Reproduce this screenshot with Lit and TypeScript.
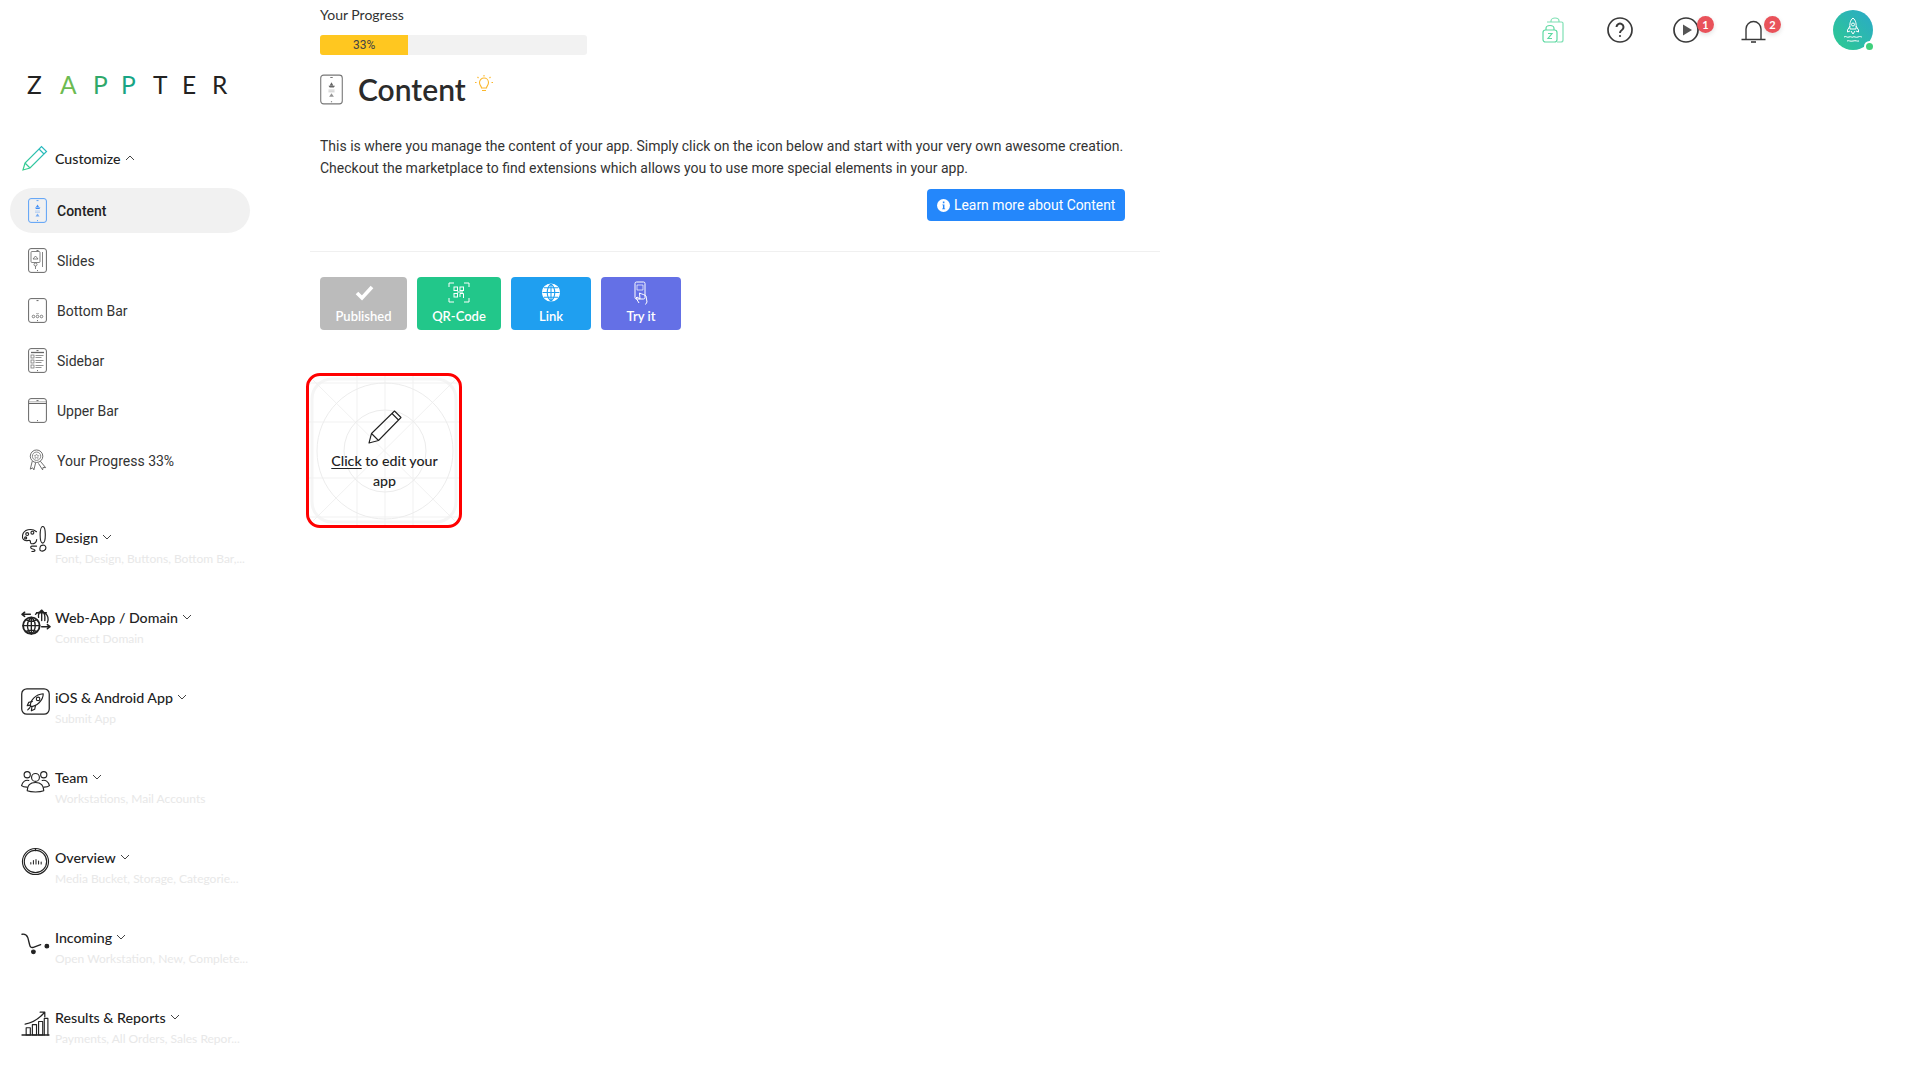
import { LitElement, html, css, svg } from "lit";
import { customElement } from "lit/decorators.js";

const phone = (inner: unknown, color = "#666") => html`<svg class="phone" viewBox="0 0 19 25" fill="none" stroke=${color} stroke-width="1"><rect x=".6" y=".6" width="17.8" height="23.8" rx="2.4"/><path d="M8.5 2.6h2M9 22.6h1"/>${inner}</svg>`;

const contentInner = (c: string) => svg`<path d="M9.5 6.5l1.5 2.6H8z M7 9.5h5.4l-1 1.4H8z" fill=${c} stroke="none"/><path d="M7 13h5M7 14.4h5" stroke=${c} stroke-width=".5" opacity=".6"/><path d="M9.5 15.5l2 3h-4z" fill=${c} stroke="none" opacity=".7"/>`;

const items = [
  { label: "Content", active: true, icon: phone(contentInner("#3f8df5"), "#5aa0f7") },
  { label: "Slides", icon: phone(svg`<rect x="3" y="3.5" width="9" height="11" rx="1" stroke-width=".8"/><path d="M14.5 4v15M5 11l2.5-3 2.5 3z" stroke-width=".8"/><circle cx="7.5" cy="16.5" r="1.5" stroke-width=".8"/><path d="M7.5 18v3" stroke-width=".8"/>`) },
  { label: "Bottom Bar", icon: phone(svg`<circle cx="5.5" cy="18.5" r="1.3" stroke-width=".8"/><circle cx="9.5" cy="18.5" r="1.3" stroke-width=".8"/><circle cx="13.5" cy="18.5" r="1.3" stroke-width=".8"/><path d="M8 15.6h3" stroke-width=".5"/>`) },
  { label: "Sidebar", icon: phone(svg`<path d="M3 4.5h13" stroke-width="1.3"/><rect x="3" y="7" width="3" height="3" stroke-width=".7"/><rect x="3" y="12" width="3" height="3" stroke-width=".7"/><rect x="3" y="17" width="3" height="3" stroke-width=".7"/><path d="M7.5 7.5h8M7.5 9.5h6M7.5 12.5h8M7.5 14.5h6M7.5 17.5h8M7.5 19.5h6" stroke-width=".7"/>`) },
  { label: "Upper Bar", icon: phone(svg`<path d="M1 5.5h17" stroke-width="1"/><path d="M1 3.8h17" stroke-width=".5"/>`) },
  { label: "Your Progress 33%", icon: html`<svg class="phone" viewBox="0 0 20 25" fill="none" stroke="#666" stroke-width="1"><circle cx="9" cy="8" r="6.6"/><circle cx="9" cy="8" r="4.4" stroke-width=".8"/><path d="M9 5.6l.8 1.6 1.7.2-1.2 1.2.3 1.7L9 9.5l-1.6.8.3-1.7-1.2-1.2 1.7-.2z" stroke-width=".6"/><path d="M4.5 13.2L2.4 21.6l2.6-1.4 1.2 2.2L8 15M13 13.3l5.6 6.7-2.8-.2-.4 2.6L11 15.5"/></svg>` },
];

const gIcons: Record<string, unknown> = {
  design: svg`<path d="M15 5.500C10 1.500 2.500 3.500 1.500 9c-.6 3.500 1.500 5.500 4 5.200 2-.2 3-.9 3.500.3.4 1-.6 2 1 2.500 2.500.7 5-1 5.200-4" /><circle cx="6" cy="7.800" r="1.400"/><circle cx="11" cy="6.500" r="1.400"/><circle cx="4.500" cy="11.500" r="1"/><ellipse cx="21" cy="8.500" rx="2.500" ry="8"/><path d="M19.300 19c2-1.200 4.800-.3 4.800 2 0 2.400-2.800 3.800-5 3-1.600-.6-.8-3.800.2-5zM15 19.500h-4.500c-1.500 0-1.500 2.200 0 2.500 1.600.3 3 .8 3 1.600 0 .8-1.200 1-3 1"/>`,
  web: svg`<circle cx="10" cy="19" r="8" stroke-width="1.800"/><path d="M2 19h16M10 11v16M5 13.500c3 1.500 7 1.500 10 0M5 24.500c3-1.500 7-1.500 10 0M10 11c-5 4-5 12 0 16M10 11c5 4 5 12 0 16" stroke-width="1.300"/><path d="M14 8a7 7 0 0 1 12 3c.5 2 .3 3.500-.5 5M15 6.500h9.500M20 4v10M20 4c-3 2.500-3.500 5-3 7M20 4c3 2.500 3.500 6 3 10" stroke-width="1.300"/><path d="M1 8h8M1 8l2.500-2M1 8l2.500 2M20 20h8M28 20l-2.500-2M28 20l-2.500 2" stroke-width="1.500"/>`,
  ios: svg`<rect x=".7" y="2.700" width="26.600" height="24.600" rx="5" stroke-width="1.200"/><path d="M9 20c-.5-6 5-12 12.500-12.500C21.500 14 15 20 9 20z"/><circle cx="16.500" cy="12.500" r="1.700"/><path d="M11 15l-3.500.8L6 19l3.500-.5M14 19l-.8 3.500L10 24l.5-3.500M8.500 21l-2 2"/>`,
  team: svg`<circle cx="14" cy="11" r="3.800"/><path d="M6 24c0-5 3-8 8-8s8 3 8 8c-4 1.500-12 1.500-16 0z"/><circle cx="6" cy="8.500" r="3"/><circle cx="22" cy="8.500" r="3"/><path d="M7.500 14c-3-1-6 1-7 5 1.200 1 3 1.400 5 1.400M20.500 14c3-1 6 1 7 5-1.200 1-3 1.400-5 1.400"/>`,
  overview: svg`<circle cx="14" cy="15" r="12.600"/><circle cx="14" cy="15" r="10.800"/><path d="M9.500 16v1.500M12 14v3.500M14.500 13v4.500M17 14.500v3M19.500 15.500v2" stroke-width="1"/><path d="M14 2.500v2" />`,
  incoming: svg`<path d="M1 8c3-.5 4.500.5 5.500 3 1 3 1.500 7 2.500 9 .6 1 1.500 1 3 .6l7-2.600" stroke-width="1.300"/><circle cx="12" cy="25" r="1.800" fill="#222"/><circle cx="25" cy="19.500" r="1.800" fill="#222"/>`,
  results: svg`<path d="M1 28h26" stroke-width="1.300"/><rect x="5" y="21" width="4" height="7"/><rect x="11" y="18" width="4" height="10"/><rect x="17" y="15" width="4" height="13"/><path d="M22.500 28V12h3.500v16"/><path d="M4 17.500c6-1 12-4 18-10.500M18.500 6h4.500v4.500" stroke-width="1.200"/>`,
};

const groups = [
  { key: "design", title: "Design", sub: "Font, Design, Buttons, Bottom Bar,..." },
  { key: "web", title: "Web-App / Domain", sub: "Connect Domain" },
  { key: "ios", title: "iOS & Android App", sub: "Submit App" },
  { key: "team", title: "Team", sub: "Workstations, Mail Accounts" },
  { key: "overview", title: "Overview", sub: "Media Bucket, Storage, Categorie..." },
  { key: "incoming", title: "Incoming", sub: "Open Workstation, New, Complete..." },
  { key: "results", title: "Results & Reports", sub: "Payments, All Orders, Sales Repor..." },
];

const chev = (up = false) => html`<svg class="chev" viewBox="0 0 10 6" fill="none" stroke="#444" stroke-width="1"><path d=${up ? "M1 5l4-4 4 4" : "M1 1l4 4 4-4"}/></svg>`;

const logo: [string, string, number][] = [["Z", "#222", 33], ["A", "#6cbb52", 33], ["P", "#2fa86a", 28], ["P", "#17a585", 32], ["T", "#222", 29], ["E", "#222", 30], ["R", "#222", 20]];

const actions = [
  { label: "Published", cls: "pub", icon: svg`<path d="M6 12l5 5 10-11" stroke-width="3.600"/>` },
  { label: "QR-Code", cls: "qr", icon: svg`<g stroke-width="1"><path d="M3 6V2h5M18 2h5v4M3 17v4h5M18 21h5v-4"/><rect x="8" y="6" width="3.500" height="3.500"/><rect x="14" y="6" width="3.500" height="3.500"/><rect x="8" y="12.500" width="3.500" height="3.500"/><path d="M14 16v-3.500h3.500V17M11 11h6"/></g>` },
  { label: "Link", cls: "link", icon: svg`<g stroke-width="1.100"><circle cx="13" cy="11.500" r="8.500" fill="#fff"/><g stroke="#1f9ff0"><path d="M4.500 11.500h17M13 3v17M6 6.800h14M6 16.200h14M13 3c-5 4-5 13 0 17M13 3c5 4 5 13 0 17"/></g></g>` },
  { label: "Try it", cls: "try", icon: svg`<g stroke-width="1"><rect x="7" y="1" width="10" height="17" rx="1.500"/><path d="M9 4h6v5H9z" opacity=".7"/><path d="M11 22l-3-5 1-1 3 2-.5-6c2 1 6 2 6.500 3l1 6-1.500 2.500"/></g>` },
];

@customElement("app-root")
export class AppRoot extends LitElement {
  static styles = css`
    :host { display: block; width: 1920px; height: 1080px; overflow: hidden; background: #fff; font-family: "Lato", "Liberation Sans", sans-serif; color: #222; }
    .page { display: flex; height: 1080px; }
    .side { width: 320px; flex: none; box-sizing: border-box; padding-top: 70px; }
    .logo { display: flex; height: 30px; padding-left: 27px; align-items: center; font-size: 24.500px; font-weight: 400; margin-top: -1px; }
    .logo span { flex: none; }
    .cust { display: flex; align-items: center; height: 40px; margin-top: 39px; padding-left: 22px; font-size: 14.2px; font-weight: 500; color: #222; }
    .cust svg.pen { width: 26px; height: 26px; margin-right: 7px; flex: none; }
    .chev { width: 10px; height: 6px; margin-left: 4px; flex: none; }
    .items { display: flex; flex-direction: column; gap: 5px; margin-top: 10px; }
    .item { display: flex; align-items: center; width: 240px; height: 45px; margin-left: 10px; box-sizing: border-box; padding-left: 18px; border-radius: 23px; font: 400 14px "Roboto", sans-serif; color: #333; }
    .item.active { background: #f1f1f1; color: #222; font-weight: 500; }
    .phone { width: 19px; height: 25px; margin-right: 10px; flex: none; }
    .groups { display: flex; flex-direction: column; gap: 40px; margin-top: 45px; }
    .group { display: grid; grid-template-columns: 30px 200px; grid-template-rows: 20px 20px; column-gap: 5px; padding-left: 20px; height: 40px; }
    .group svg.gi { width: 30px; height: 30px; grid-row: 1 / span 2; align-self: start; margin: -2px 0 0 1px; }
    .gt { display: flex; align-items: center; height: 20px; margin-top: -1px; font-size: 14.2px; font-weight: 500; white-space: nowrap; }
    .gs { height: 20px; margin-top: 1px; font: 400 12px/20px "Lato", sans-serif; color: #e8e8e8; white-space: nowrap; }

    .main { flex: 1; min-width: 0; display: flex; flex-direction: column; }
    .top { display: flex; justify-content: space-between; height: 55px; }
    .pl { font-size: 14px; line-height: 20px; margin-top: 5px; color: #333; }
    .bar { width: 267px; height: 20px; margin-top: 10px; background: #f2f2f2; border-radius: 3px; overflow: hidden; }
    .fill { height: 100%; background: #ffc720; text-align: center; font: 400 12px/20px "Roboto", sans-serif; color: #444; }
    .tools { display: flex; align-items: flex-start; padding-top: 10px; }
    .tool { position: relative; width: 40px; height: 40px; display: flex; align-items: center; justify-content: center; }
    .tool svg { width: 32px; height: 32px; }
    .badge { position: absolute; top: 6px; left: 31px; width: 17px; height: 17px; border-radius: 50%; background: #e9525a; color: #fff; font: 700 11px/17px "Lato", sans-serif; text-align: center; box-shadow: 0 2px 5px rgba(0,0,0,.12); }
    .avatar { position: relative; width: 40px; height: 40px; border-radius: 50%; background: linear-gradient(45deg, #2ecb8f, #2aa9c9); display: flex; align-items: center; justify-content: center; }
    .avatar svg { width: 24px; height: 26px; }
    .dot { position: absolute; right: -2px; bottom: -2px; width: 7px; height: 7px; border-radius: 50%; background: #3fd07c; border: 2px solid #fff; }
    .head { display: flex; align-items: flex-start; height: 50px; margin-top: 19px; }
    .head .hp { width: 23px; height: 31px; margin: 0 15px 0 0; }
    .head h1 { margin: -7px 0 0; font-size: 30px; line-height: 44px; font-weight: 600; color: #2b2b2b; }
    .head .bulb { width: 18px; height: 18px; margin: 1px 0 0 9px; }
    .para { width: 840px; margin: 11px 0 0; font: 400 14px/22px "Roboto", sans-serif; color: #333; }
    .learnrow { width: 805px; display: flex; justify-content: flex-end; margin-top: 10px; }
    .learn { display: flex; align-items: center; gap: 4px; height: 32px; width: 198px; box-sizing: border-box; padding-left: 10px; background: #2487fb; color: #fff; border-radius: 4px; font: 400 13.9px "Roboto", sans-serif; }
    .learn svg { width: 13px; height: 13px; flex: none; }
    .divider { width: 850px; height: 1px; margin: 30px 0 0 -10px; background: #f0f0f0; }
    .actions { display: flex; gap: 10px; margin-top: 25px; }
    .action { height: 53px; display: flex; flex-direction: column; align-items: center; border-radius: 4px; color: #fff; font-size: 13px; font-weight: 600; line-height: 16px; box-sizing: border-box; padding-top: 4px; }
    .action svg { width: 26px; height: 24px; margin-bottom: 3px; }
    .pub { width: 87px; background: #bbbbbb; }
    .qr { width: 84px; background: #22c78a; }
    .link { width: 80px; background: #1f9ff0; }
    .try { width: 80px; background: #6470e6; }
    .tile { position: relative; width: 156px; height: 155px; margin: 43px 0 0 -14px; box-sizing: border-box; border: 3px solid #ff0000; border-radius: 14px; overflow: hidden; display: flex; flex-direction: column; align-items: center; }
    .tile .grid { position: absolute; left: 0; top: 0; width: 150px; height: 149px; }
    .tile .p { position: relative; width: 34px; height: 34px; margin: 34px 0 0 2px; }
    .tile .t { position: relative; width: 112px; margin: 7px 0 0 1px; text-align: center; font-size: 14.2px; font-weight: 500; line-height: 20px; color: #222; }
    .tile u { text-underline-offset: 2px; }
  `;

  render() {
    return html`<div class="page">
      <aside class="side">
        <div class="logo">${logo.map(([c, col, w]) => html`<span style="color:${col};width:${w}px">${c}</span>`)}</div>
        <div class="cust">
          <svg class="pen" viewBox="0 0 26 26" fill="none" stroke-width="1.200"><defs><linearGradient id="pg" x1="0" y1="1" x2="1" y2="0"><stop offset="0" stop-color="#37cf8a"/><stop offset="1" stop-color="#25b5c5"/></linearGradient></defs><path stroke="url(#pg)" d="M1 25l2-7L19.500 1.500l5 5L8 23zM3 18l5 5M17 4l5 5"/></svg>
          Customize ${chev(true)}
        </div>
        <div class="items">
          ${items.map((i) => html`<div class="item ${i.active ? "active" : ""}">${i.icon}<span>${i.label}</span></div>`)}
        </div>
        <div class="groups">
          ${groups.map((g) => html`<div class="group">
            <svg class="gi" viewBox="0 0 29 29" fill="none" stroke="#222" stroke-width="1.100" stroke-linecap="round" stroke-linejoin="round">${gIcons[g.key]}</svg>
            <div class="gt">${g.title} ${chev()}</div>
            <div class="gs">${g.sub}</div>
          </div>`)}
        </div>
      </aside>
      <main class="main">
        <div class="top">
          <div>
            <div class="pl">Your Progress</div>
            <div class="bar"><div class="fill" style="width:33%">33%</div></div>
          </div>
          <div class="tools">
            <div class="tool" style="margin-right:26px"><svg viewBox="0 0 32 32" fill="none" stroke="#7fe0b4" stroke-width="1.200"><path d="M9 8h14.500a1.500 1.500 0 0 1 1.500 1.500V26a2 2 0 0 1-2 2H19M13 8V7a4 3 0 0 1 8 0v1"/><rect x="5" y="16" width="14" height="12" rx="2.500" stroke="#5ed9a2"/><path d="M8 16v-1.500a4 3 0 0 1 8 0V16M10 19.500h4l-4 5h4" stroke="#5ed9a2"/></svg></div>
            <div class="tool" style="margin-right:26px"><svg viewBox="0 0 32 32" fill="none" stroke="#3a3a3a" stroke-width="1.700"><circle cx="16" cy="16" r="12"/><path d="M12.500 13a3.500 3.500 0 1 1 5.400 3c-1.300.8-1.900 1.500-1.900 3" stroke-width="2"/><circle cx="16" cy="22" r="1.100" fill="#3a3a3a" stroke="none"/></svg></div>
            <div class="tool" style="margin-right:27px"><svg viewBox="0 0 32 32" fill="none" stroke="#3a3a3a" stroke-width="1.700"><circle cx="16" cy="16" r="12"/><path d="M13 10.500l9 5.500-9 5.500z" fill="#555" stroke="none"/></svg><span class="badge">1</span></div>
            <div class="tool" style="margin-right:60px"><svg viewBox="0 0 32 32" fill="none" stroke="#3a3a3a" stroke-width="1.400"><path d="M9 25V15a7.500 7.500 0 0 1 15 0v10M4.500 25.500h24"/><path d="M14 28h5" stroke-width="1.600"/></svg><span class="badge">2</span></div>
            <div class="avatar" style="margin-right:47px"><svg viewBox="0 0 24 26" fill="none" stroke="#fff" stroke-width="1"><path d="M12 1c3 2.500 3.500 6 3 11H9c-.5-5 0-8.500 3-11zM9 9l-2.500 4v2l2.500-1M15 9l2.500 4v2l-2.500-1"/><circle cx="12" cy="7.500" r="1.500"/><path d="M10 14l2 3 2-3M3 20c2-1.500 3 1 5 0s3 1 4 0 3 1 5 0 3 0 4 0M6 24c2-1 3 .8 6 0s4 .5 6 0"/></svg><span class="dot"></span></div>
          </div>
        </div>
        <div class="head">
          <svg class="hp" viewBox="0 0 19 25" fill="none" stroke="#777" stroke-width=".9"><rect x=".6" y=".6" width="17.800" height="23.800" rx="2.400"/><path d="M8.500 2.600h2M9 22.600h1"/>${contentInner("#666")}</svg>
          <h1>Content</h1>
          <svg class="bulb" viewBox="0 0 18 18" fill="none" stroke="#fbb72c" stroke-width="1.100"><path d="M6.500 13c0-2-2-2.500-2-5.500a4.500 4.500 0 0 1 9 0c0 3-2 3.500-2 5.500zM7 15.500h4"/><path d="M9 0v1.500M2.500 2l1 1M15.500 2l-1 1M0 7.500h1.500M16.500 7.500H18"/></svg>
        </div>
        <p class="para">This is where you manage the content of your app. Simply click on the icon below and start with your very own awesome creation.<br>Checkout the marketplace to find extensions which allows you to use more special elements in your app.</p>
        <div class="learnrow"><div class="learn"><svg viewBox="0 0 14 14"><circle cx="7" cy="7" r="7" fill="#fff"/><path d="M5.800 5.800h2.200v4.300h.8v1H5.500v-1h.9V6.800h-.6zM6.300 2.800h1.700v1.800H6.300z" fill="#2487fb"/></svg>Learn more about Content</div></div>
        <div class="divider"></div>
        <div class="actions">
          ${actions.map((a) => html`<div class="action ${a.cls}"><svg viewBox="0 0 26 24" fill="none" stroke="#fff">${a.icon}</svg>${a.label}</div>`)}
        </div>
        <div class="tile">
          <svg class="grid" viewBox="0 0 150 149" fill="none" stroke="#ececec" stroke-width="1">
            <rect x="3" y="3" width="144" height="143" rx="20" stroke="#f5f5f5" stroke-width="3"/>
            <path d="M48 0v149M76 0v149M104 0v149M0 7h150M0 46h150M0 102h150M0 141h150M3 3l144 143M147 3L3 146" stroke="#f1f1f1"/>
            <circle cx="76" cy="75" r="68"/><circle cx="76" cy="75" r="41"/>
          </svg>
          <svg class="p" viewBox="0 0 34 34" fill="none" stroke="#222" stroke-width="1.100" stroke-linejoin="round"><path d="M1 33l2.500-9.500L26.500 1l6.500 6.500L10.500 30.500zM3.500 23.500l7 7M24 3.500l6.500 6.500"/></svg>
          <div class="t"><u>Click</u> to edit your app</div>
        </div>
      </main>
    </div>`;
  }
}
